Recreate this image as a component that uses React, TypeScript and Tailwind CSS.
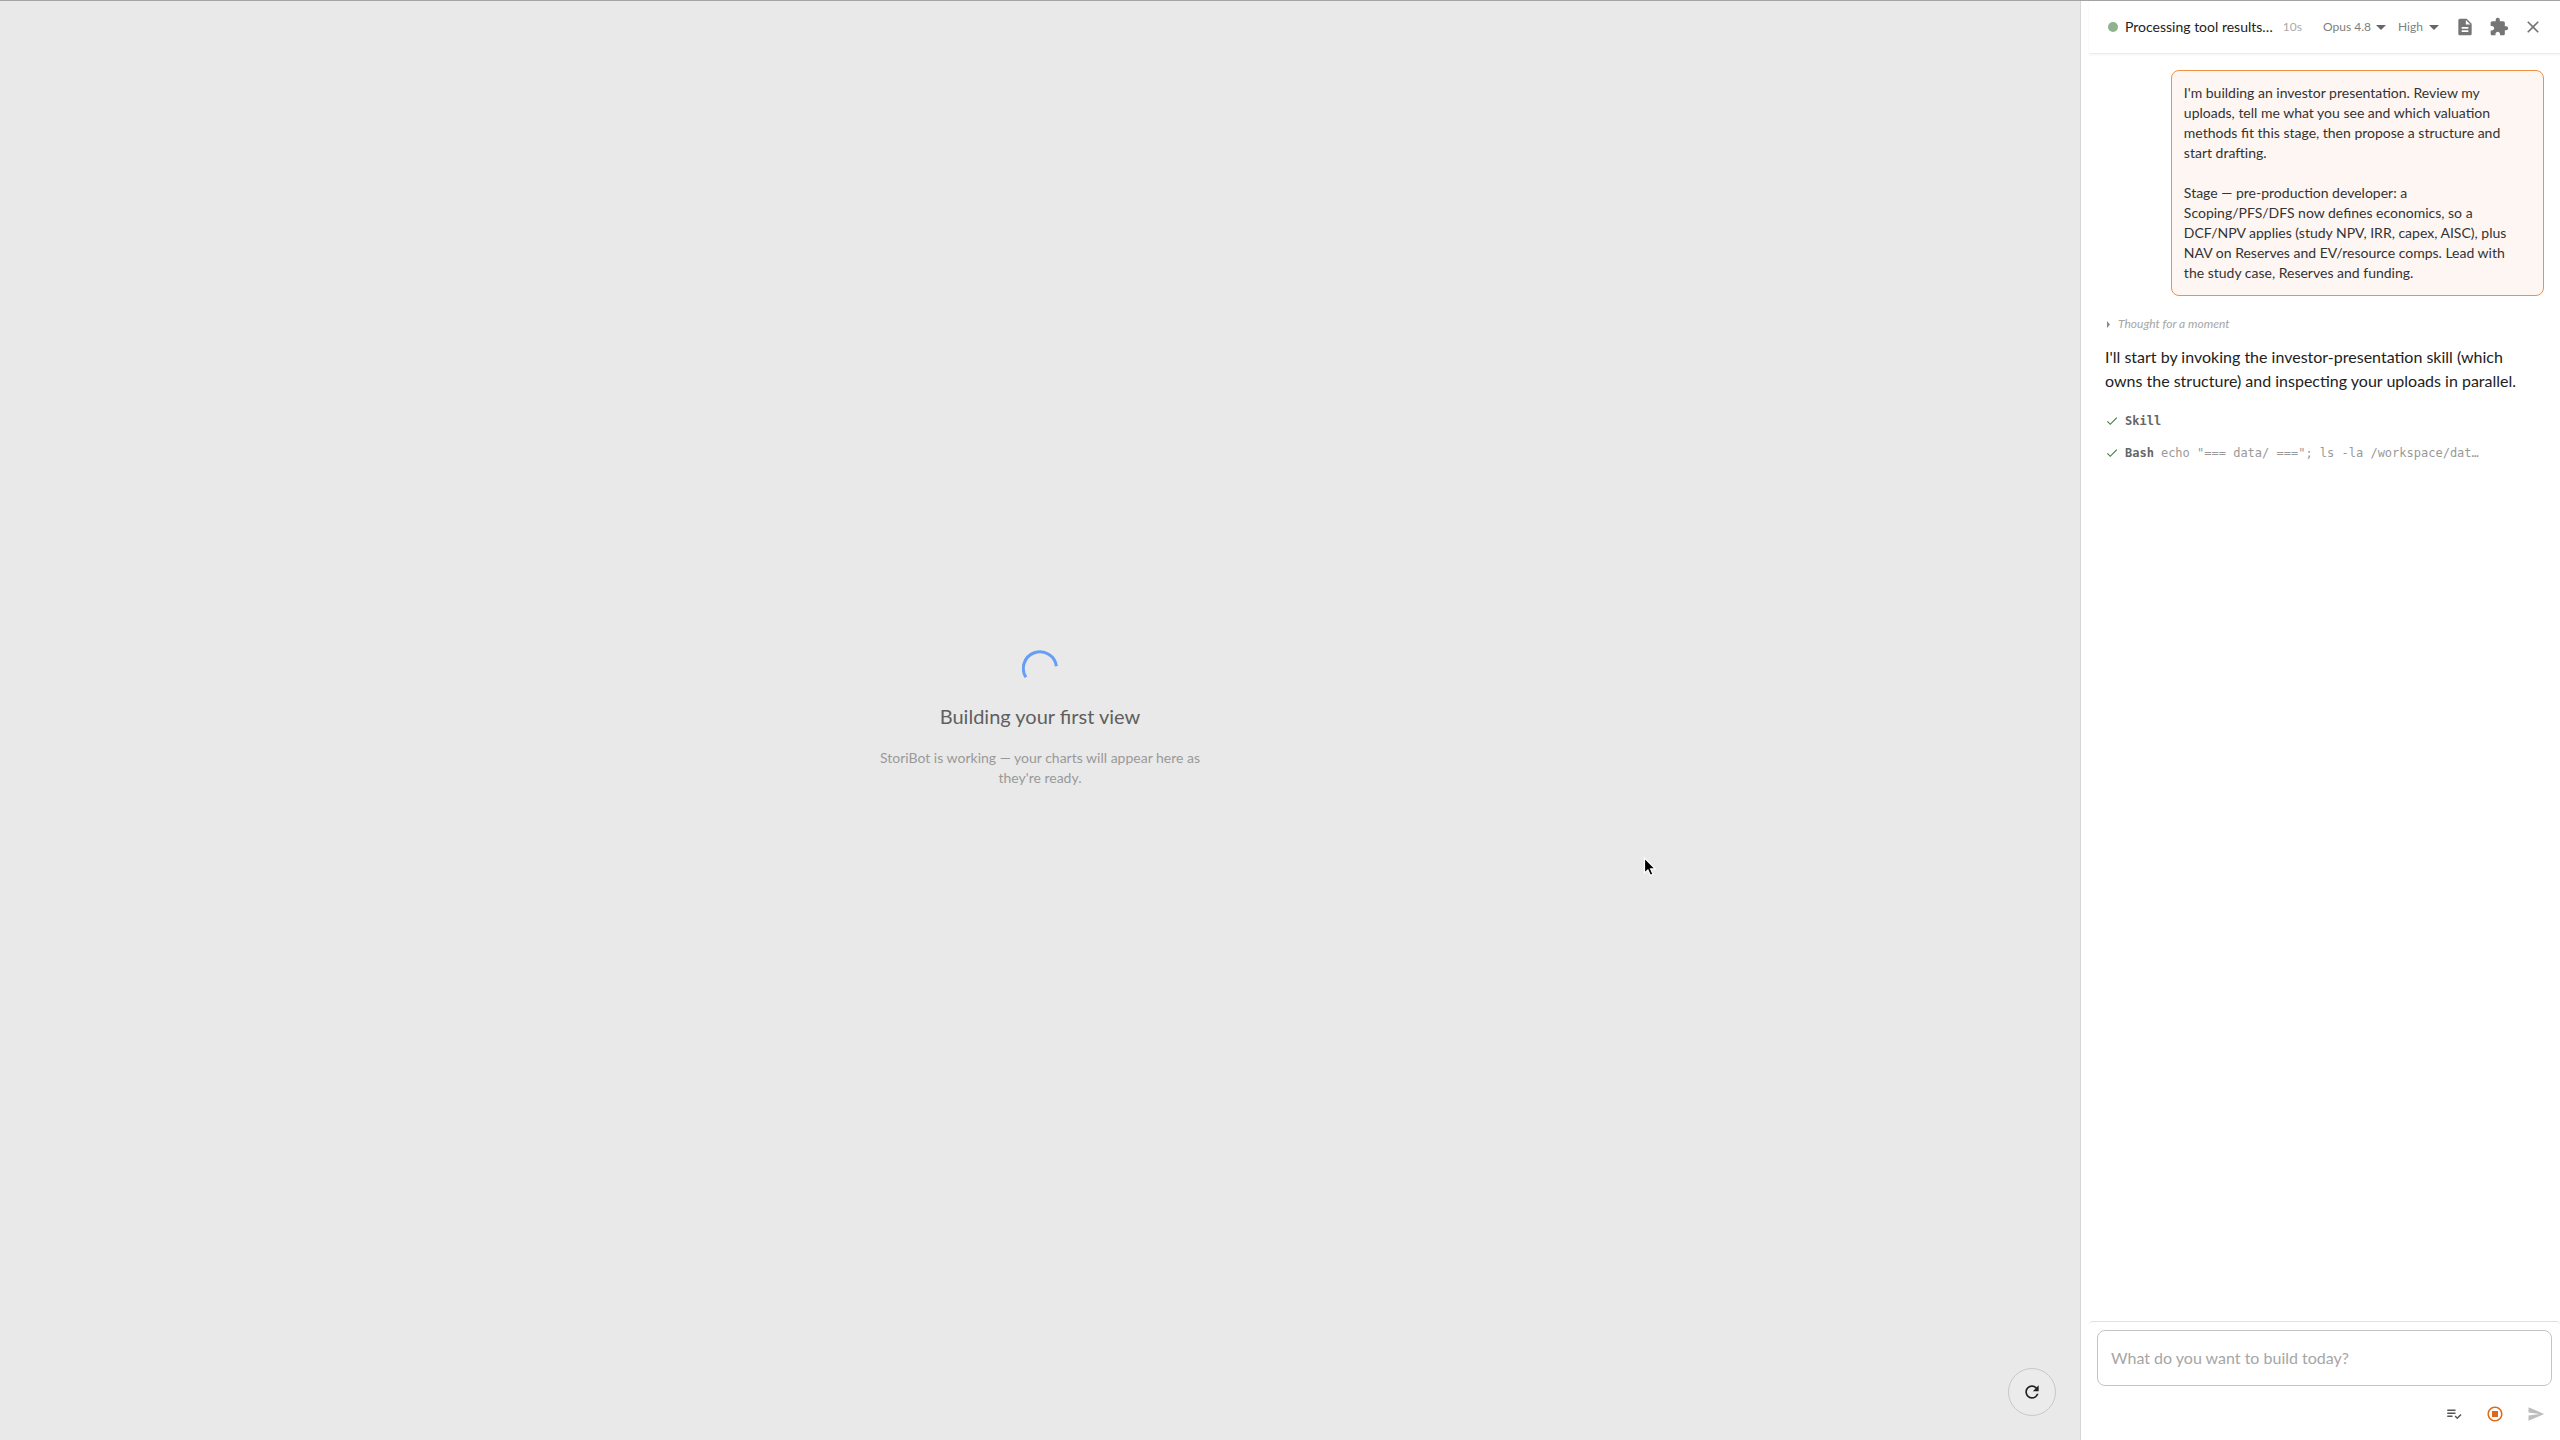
import React from 'react';
import {
  MdArrowDropDown,
  MdCheck,
  MdClose,
  MdDescription,
  MdExtension,
  MdOutlineStopCircle,
  MdPlaylistAddCheck,
  MdRefresh,
  MdSend,
} from 'react-icons/md';

const toolCalls = [
  { name: 'Skill', detail: '' },
  { name: 'Bash', detail: 'echo "=== data/ ==="; ls -la /workspace/dat…' },
];

const prompt = `I'm building an investor presentation. Review my uploads, tell me what you see and which valuation methods fit this stage, then propose a structure and start drafting.

Stage — pre-production developer: a
Scoping/PFS/DFS now defines economics, so a
DCF/NPV applies (study NPV, IRR, capex, AISC), plus
NAV on Reserves and EV/resource comps. Lead with
the study case, Reserves and funding.`;

const Spinner = () => (
  <svg className="h-9 w-9" viewBox="0 0 36 36" fill="none">
    <path d="M3.9 27.2 A16.6 16.6 0 1 1 34.4 16.2" stroke="#669df6" strokeWidth="3" />
  </svg>
);

const Pointer = () => (
  <svg className="absolute left-[1643px] top-[856px] h-6 w-4" viewBox="0 0 16 24">
    <path
      d="M1.5 2 V17 L4.9 13.9 L7.4 19.4 L10 18.2 L7.6 12.9 H12.2 Z"
      fill="#000"
      stroke="#fff"
      strokeWidth="1.2"
    />
  </svg>
);

const SmallSelect = ({ label, value, width }: { label: string; value: string; width: string }) => (
  <div className="relative flex items-center">
    <select
      aria-label={label}
      defaultValue={value}
      className={`${width} appearance-none bg-transparent text-xs text-[#808080] outline-none`}
    >
      <option>{value}</option>
    </select>
    <MdArrowDropDown className="pointer-events-none absolute right-0 h-6 w-6 text-[#666]" />
  </div>
);

const IconButton = ({ icon: Icon, label, className }: { icon: any; label: string; className: string }) => (
  <button aria-label={label} className="flex p-[7px]">
    <Icon className={className} />
  </button>
);

const Canvas = () => (
  <main className="relative flex flex-1 flex-col items-center justify-center border-r border-[#d6d6d6] bg-[#e9e9e9] pb-[2px]">
    <Spinner />
    <h1 className="mt-[14px] text-xl leading-8 text-[#5f5f5f]">Building your first view</h1>
    <p className="mt-4 w-[360px] text-center text-sm leading-5 text-[#999]">
      StoriBot is working — your charts will appear here as they're ready.
    </p>
    <button
      aria-label="Refresh"
      className="absolute bottom-6 right-6 flex h-12 w-12 items-center justify-center rounded-full border border-[#c8c8c8] bg-[#ebebeb]"
    >
      <MdRefresh className="h-5 w-5 text-[#222]" />
    </button>
  </main>
);

const ChatHeader = () => (
  <header className="flex h-[54px] shrink-0 items-center border-b border-[#ededed] pl-[19px] pr-[10px] shadow-xs">
    <span className="h-[10px] w-[10px] rounded-full bg-[#8fb28f]" />
    <span className="ml-[7px] text-sm text-[#222]">Processing tool results…</span>
    <span className="ml-[10px] text-xs text-[#aaa]">10s</span>
    <div className="ml-auto flex items-center">
      <SmallSelect label="Model" value="Opus 4.8" width="w-[70px]" />
      <div className="ml-[5px]">
        <SmallSelect label="Effort" value="High" width="w-[48px]" />
      </div>
      <div className="ml-[2px] flex">
        <IconButton icon={MdDescription} label="Documents" className="h-5 w-5 text-[#757575]" />
        <IconButton icon={MdExtension} label="Extensions" className="h-5 w-5 text-[#757575]" />
        <IconButton icon={MdClose} label="Close" className="h-5 w-5 text-[#757575]" />
      </div>
    </div>
  </header>
);

const Messages = () => (
  <div className="flex-1 overflow-hidden p-4">
    <div className="ml-auto w-[85%] whitespace-pre-line rounded-lg border border-[#ee9243] bg-[#fef6f2] p-3 text-sm leading-5 text-[#333]">
      {prompt}
    </div>

    <button className="mt-5 flex items-center text-xs leading-4 italic text-[#a6a6a6]">
      <svg className="ml-[2px] mr-2 h-[7px] w-[3px]" viewBox="0 0 3 7" fill="#8a8a8a">
        <path d="M0 0 L3 3.5 L0 7 Z" />
      </svg>
      Thought for a moment
    </button>

    <p className="mt-[13px] text-base leading-6 text-[#222]">
      I'll start by invoking the investor-presentation skill (which owns the structure) and inspecting your uploads in
      parallel.
    </p>

    <ul className="mt-5 flex flex-col gap-4 font-['DejaVu_Sans_Mono',monospace] text-xs leading-4">
      {toolCalls.map((call) => (
        <li key={call.name} className="flex items-center">
          <MdCheck className="h-[14px] w-[14px] shrink-0 text-[#43824a]" />
          <span className="ml-[6px] font-bold text-[#666]">{call.name}</span>
          <span className="ml-[7px] whitespace-nowrap text-[#999]">{call.detail}</span>
        </li>
      ))}
    </ul>
  </div>
);

const Composer = () => (
  <footer className="shrink-0 rounded-t border-t border-[#e0e0e0] px-2 pt-2">
    <input
      aria-label="Message"
      placeholder="What do you want to build today?"
      className="h-14 w-full rounded-lg border border-[#c4c4c4] px-[13px] pb-[2px] text-base text-[#222] outline-none placeholder:text-[#a6a6a6]"
    />
    <div className="flex h-[54px] items-center justify-end gap-[9px] pt-[2px]">
      <IconButton icon={MdPlaylistAddCheck} label="Plan" className="h-[18px] w-[18px] text-[#555]" />
      <IconButton icon={MdOutlineStopCircle} label="Stop" className="h-[18px] w-[18px] text-[#e0661a]" />
      <IconButton icon={MdSend} label="Send" className="h-[18px] w-[18px] text-[#bdbdbd]" />
    </div>
  </footer>
);

const App = () => (
  <div className="relative flex h-screen bg-white font-['Lato','Liberation_Sans',sans-serif]">
    <Canvas />
    <aside className="ml-2 flex w-[471px] shrink-0 flex-col">
      <ChatHeader />
      <Messages />
      <Composer />
    </aside>
    <div className="absolute inset-x-0 top-0 h-px bg-[#a3a3a3]" />
    <Pointer />
  </div>
);

export default App;
